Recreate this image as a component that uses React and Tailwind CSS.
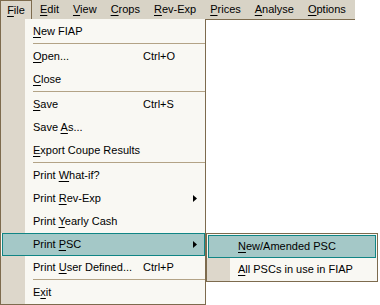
import React from "react";

const menuBar = ["&File", "&Edit", "&View", "&Crops", "&Rev-Exp", "&Prices", "&Analyse", "&Options"];

const fileItems = [
  { label: "&New FIAP" },
  { sep: true },
  { label: "&Open...", keys: "Ctrl+O" },
  { label: "&Close" },
  { sep: true },
  { label: "&Save", keys: "Ctrl+S" },
  { label: "Save &As..." },
  { label: "&Export Coupe Results" },
  { sep: true },
  { label: "Print &What-if?" },
  { label: "Print &Rev-Exp", sub: true },
  { label: "Print &Yearly Cash" },
  { label: "Print &PSC", sub: true, active: true },
  { label: "Print &User Defined...", keys: "Ctrl+P" },
  { sep: true },
  { label: "E&xit" },
];

// "&" marks the access key letter
function Label({ text }) {
  const i = text.indexOf("&");
  if (i < 0) return <span>{text}</span>;
  return (
    <span className="whitespace-pre">
      {text.slice(0, i)}
      <span className="underline underline-offset-[2px] decoration-1">{text[i + 1]}</span>
      {text.slice(i + 2)}
    </span>
  );
}

function Arrow() {
  return (
    <svg width="4" height="7" viewBox="0 0 4 7" className="block">
      <path d="M0 0 L4 3.5 L0 7 Z" fill="#000" />
    </svg>
  );
}

function Row({ item }) {
  if (item.sep) {
    return (
      <div className="flex h-[2px]">
        <div className="w-[24px] bg-[#ddd7cb]" />
        <div className="flex-1 pl-[8px]">
          <div className="h-px bg-[#b3a386]" />
        </div>
      </div>
    );
  }
  const body = (
    <>
      <div className="w-[110px]">
        <Label text={item.label} />
      </div>
      <div className="w-[50px]">{item.keys}</div>
      {item.sub && <Arrow />}
    </>
  );
  if (item.active) {
    return (
      <div className="flex h-[23px] items-center ml-px border border-[#108585] bg-[#a4c8c7] pl-[30px]">
        {body}
      </div>
    );
  }
  return (
    <div className="flex h-[23px] items-center">
      <div className="w-[24px] self-stretch bg-[#ddd7cb]" />
      <div className="flex items-center pl-[8px]">{body}</div>
    </div>
  );
}

export default function App() {
  return (
    <div
      className="relative w-[380px] h-[305px] bg-white text-[11px] text-black overflow-hidden"
      style={{ fontFamily: '"Liberation Sans", Arial, sans-serif' }}
    >
      <div className="flex h-[20px] w-[355px] items-center bg-[#d8d3c6] border-b border-[#7d6b4e]">
        {menuBar.map((m, i) => (
          <div
            key={m}
            className={
              i === 0
                ? "shrink-0 flex h-[20px] w-[32px] items-center justify-center border border-b-0 border-[#7d6b4e] bg-[#ddd7cb]"
                : "shrink-0 px-[7px] flex items-center h-[20px] " + (i === 1 ? "ml-px" : "")
            }
          >
            <Label text={m} />
          </div>
        ))}
      </div>

      {/* File dropdown */}
      <div className="absolute left-0 top-[19px] w-[206px] h-[286px] border border-t-0 border-[#7d6b4e] bg-[#f9f8f3] flex flex-col">
        <div className="h-px flex">
          <div className="w-[24px] bg-[#ddd7cb]" />
        </div>
        {fileItems.map((it, i) => (
          <Row key={i} item={it} />
        ))}
        <div className="flex-1 flex">
          <div className="w-[24px] bg-[#ddd7cb]" />
        </div>
      </div>

      {/* Print PSC submenu */}
      <div className="absolute left-[206px] top-[233px] w-[172px] h-[49px] border border-[#7d6b4e] bg-[#f9f8f3] flex flex-col">
        <div className="flex h-[23px] items-center mx-px mt-px border border-[#108585] bg-[#a4c8c7] pl-[29px]">
          <Label text="&New/Amended PSC" />
        </div>
        <div className="flex h-[23px] items-center">
          <div className="w-[23px] self-stretch bg-[#ddd7cb]" />
          <div className="pl-[8px]">
            <Label text="&All PSCs in use in FIAP" />
          </div>
        </div>
      </div>
    </div>
  );
}
